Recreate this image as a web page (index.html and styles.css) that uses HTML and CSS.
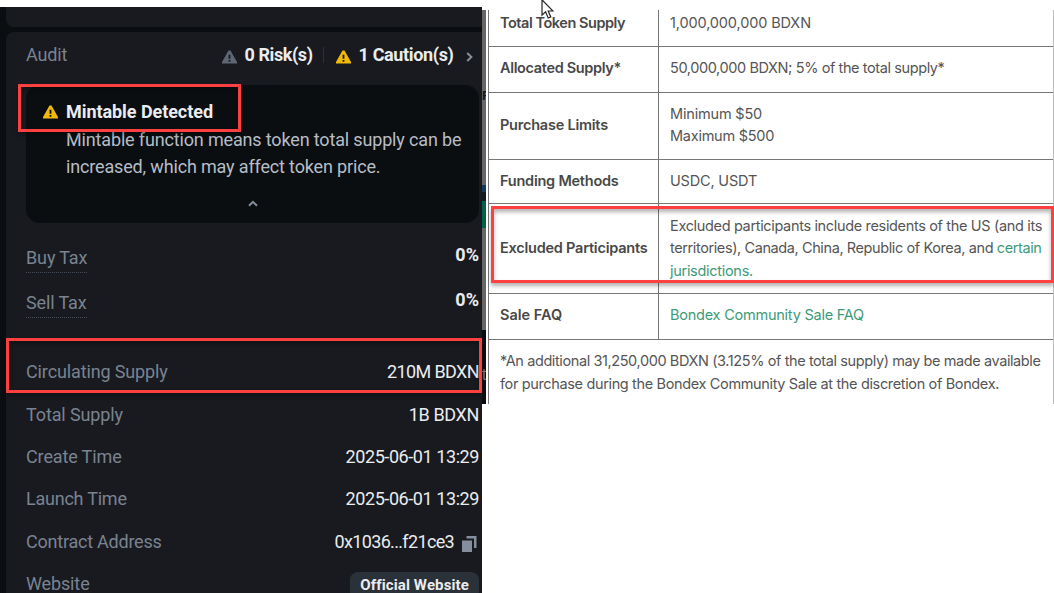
FILE: index.html
```
<!DOCTYPE html>
<html lang="en">
<head>
<meta charset="utf-8">
<title>BDXN token audit</title>
<link rel="stylesheet" href="styles.css">
</head>
<body>
<svg class="defs" width="0" height="0" aria-hidden="true">
  <symbol id="warn" viewBox="0 0 15 14"><path fill="currentColor" fill-rule="evenodd" d="M6.5.5h2L15 12v1.5H0V12zM6.6 4.8v4h1.8v-4zM6.6 10v1.8h1.8V10z"/></symbol>
</svg>
<main class="page">
  <section class="token">
    <div class="card card-prev"></div>
    <div class="card card-main">
      <div class="audit">
        <span class="label">Audit</span>
        <svg class="warn grey"><use href="#warn"/></svg>
        <b class="t-risk">0 Risk(s)</b>
        <i class="sep"></i>
        <svg class="warn yellow"><use href="#warn"/></svg>
        <b class="t-caution">1 Caution(s)</b>
        <svg class="chev" viewBox="0 0 7 10"><path d="M1.2 1 5.4 5 1.2 9"/></svg>
      </div>
      <div class="notice">
        <div class="notice-title"><svg class="warn yellow"><use href="#warn"/></svg><b class="t-mint">Mintable Detected</b></div>
        <p>Mintable function means token total supply can be<br>increased, which may affect token price.</p>
        <svg class="up" viewBox="0 0 10 7"><path d="M1 5.8 5 1.8 9 5.8"/></svg>
        <div class="mark mark-mint"></div>
      </div>
      <div class="tax"><span class="label dotted">Buy Tax</span><b class="pct">0%</b></div>
      <div class="tax"><span class="label dotted">Sell Tax</span><b class="pct">0%</b></div>
      <div class="facts">
        <div class="fact"><span class="label">Circulating Supply</span><span class="t-210">210M BDXN</span><div class="mark mark-circ"></div></div>
        <div class="fact"><span class="label">Total Supply</span><span class="t-1b">1B BDXN</span></div>
        <div class="fact"><span class="label">Create Time</span><span class="t-date">2025-06-01 13:29</span></div>
        <div class="fact"><span class="label t-narrow">Launch Time</span><span class="t-date">2025-06-01 13:29</span></div>
        <div class="fact"><span class="label t-narrow">Contract Address</span><span class="t-addr">0x1036...f21ce3</span><svg class="copy" viewBox="0 0 15 16"><path d="M4.500 0H14.500v12H12V2.500H4.500z"/><path d="M0 4.500h10V16H0z"/></svg></div>
        <div class="fact"><span class="label">Website</span><span class="site"><b>Official Website</b></span></div>
      </div>
    </div>
  </section>
  <div class="edge"><i class="e-top">F</i><i class="e-blue"></i><i class="e-dark"></i><i class="e-green"></i><i class="e-grey"></i><i class="e-end">t</i></div>
  <section class="sale">
    <div class="row"><b class="s-tts">Total Token Supply</b><p><span class="s-1b">1,000,000,000 BDXN</span></p></div>
    <div class="row"><b class="s-alloc">Allocated Supply*</b><p><span class="s-50">50,000,000 BDXN; 5% of the total supply*</span></p></div>
    <div class="row limits"><b>Purchase Limits</b><p><span class="s-min">Minimum $50</span><span class="s-max">Maximum $500</span></p></div>
    <div class="row funding"><b>Funding Methods</b><p><span class="s-min">USDC, USDT</span></p></div>
    <div class="row excluded"><b>Excluded Participants</b><p><span class="s-ex1">Excluded participants include residents of the US (and its</span><span class="s-ex2">territories), Canada, China, Republic of Korea, and <a>certain</a></span><span class="s-ex3"><a>jurisdictions.</a></span></p><div class="mark mark-excl"></div></div>
    <div class="row"><b class="s-faq">Sale FAQ</b><p><a class="s-bond">Bondex Community Sale FAQ</a></p></div>
    <p class="foot"><span class="s-f1">*An additional 31,250,000 BDXN (3.125% of the total supply) may be made available</span><br><span class="s-f2">for purchase during the Bondex Community Sale at the discretion of Bondex.</span></p>
  </section>
</main>
<svg class="cursor" viewBox="0 0 13 21"><path d="M1 .8V16.200L4.600 12.800 7.200 19 9.800 17.900 7.200 12H12z"/></svg>
</body>
</html>
```
FILE: styles.css
```
* { box-sizing: border-box; }
body { margin: 0; background: #fff; overflow: hidden; }
.page { display: flex; align-items: flex-start; width: 1054px; height: 593px; overflow: hidden; }
.defs { position: absolute; }

.token { flex: none; width: 482px; height: 586px; margin-top: 7px; padding-left: 6px; background: #0b0e11; font: 18px/26px Roboto, sans-serif; color: #eaecef; overflow: hidden; }
.card { background: #181a20; }
.card-prev { height: 20px; border-radius: 0 0 0 8px; }
.card-main { height: 561px; margin-top: 5px; padding: 0 3px 0 20px; border-radius: 8px 0 0 0; }
.label { margin-right: auto; color: #7a8390; letter-spacing: -.13px; }
.warn { width: 15px; height: 14px; flex: none; }
.grey { color: #5e6673; }
.yellow { color: #f0b90b; }
b { font-weight: 700; white-space: nowrap; }
span { white-space: nowrap; }
.t-risk { letter-spacing: -.42px; }
.t-caution { letter-spacing: -.36px; }
.t-mint { letter-spacing: -.06px; }
.t-210 { letter-spacing: -.6px; }
.t-1b { letter-spacing: -.35px; }
.t-date { letter-spacing: -.42px; }
.t-narrow { letter-spacing: -.23px; }
.t-addr { letter-spacing: -.66px; }

.audit { display: flex; align-items: center; height: 46px; padding-right: 6.500px; }
.audit .warn { margin: 4px 8px 0 0; }
.sep { width: 1px; height: 16px; margin: 0 12px 0 10px; background: #2b3139; }
.chev { width: 7px; height: 10px; margin: 3px 0 0 12px; }
.chev path, .up path { fill: none; stroke: #848e9c; stroke-width: 2; }

.notice { position: relative; margin-top: 7px; height: 138px; padding: 14px 0 0 17px; border-radius: 14px; background: #0b0e11; }
.notice-title { display: flex; align-items: center; gap: 8px; height: 26px; }
.notice p { margin: 1px 0 0 23px; line-height: 27px; letter-spacing: -.155px; white-space: nowrap; color: #b7bdc6; }
.up { display: block; width: 10px; height: 7px; margin: 20px 0 0 205px; }
.mark { position: absolute; border: 3px solid #ff4040; box-shadow: 0 3px 4px rgba(0,0,0,.3), inset 0 3px 4px rgba(0,0,0,.3); }
.mark-mint { left: -8px; top: -1px; width: 223px; height: 48px; }

.tax { display: flex; align-items: flex-start; height: 45px; }
.notice + .tax { margin-top: 22px; }
.dotted { height: 28px; border-bottom: 1px dotted #474d57; }
.pct { margin-top: -3px; }

.facts { padding-top: 16px; }
.fact { position: relative; display: flex; align-items: center; height: 42.350px; }
.mark-circ { left: -20px; top: -13px; width: 476px; height: 55px; }
.copy { width: 15px; height: 16px; margin: 4px 2px 0 8px; fill: #848e9c; }
.site { height: 27px; margin-top: 4px; padding: 0 10px; border-radius: 8px; background: #2b3139; font-size: 15px; letter-spacing: .12px; }

.edge { flex: none; display: flex; flex-direction: column; width: 4px; height: 394px; margin-top: 10px; overflow: hidden; font: 13px/14px "Liberation Sans", sans-serif; }
.edge i { font-style: normal; flex: none; }
.e-top { height: 175px; padding-top: 79px; background: #666; color: #111820; font-weight: 700; }
.e-blue { height: 7px; background: #123a5c; }
.e-dark { height: 9px; background: #101c20; }
.e-green { height: 27px; background: #00614b; }
.e-grey { height: 102px; background: #666; }
.e-end { height: 74px; padding-top: 38px; background: #0b0e11; color: #777; font-size: 16px; }

.sale { flex: none; width: 566px; height: 394px; margin: 10px 0 0 2px; border-left: 1px solid #777; border-right: 1px solid #bbb; font: 14.500px/22.500px Inter, sans-serif; color: #555; }
.row { position: relative; display: grid; grid-template-columns: 169px 1fr; align-items: center; height: 46px; border-bottom: 1px solid #777; }
.row b { padding: 0 0 2px 11px; font-weight: 600; letter-spacing: -.23px; color: #484848; }
.row p { display: flex; flex-direction: column; justify-content: center; height: 100%; margin: 0; padding: 0 0 2px 11px; border-left: 1px solid #777; }
.row:first-child { height: 37px; }
.row:first-child b, .row:first-child p { padding-bottom: 10px; }
.row.limits { height: 67px; }
.row.funding { height: 44px; }
.row.excluded { height: 90px; }
.row.funding b, .row.funding p, .row.excluded b, .row.excluded p { padding-bottom: 0; }
.row .s-tts { letter-spacing: -.46px; }
.row .s-alloc { letter-spacing: -.34px; }
.row .s-faq { letter-spacing: 0; }
.s-1b { letter-spacing: -.13px; }
.s-50 { letter-spacing: -.4px; }
.s-min { letter-spacing: -.18px; }
.s-max { letter-spacing: -.25px; }
.s-ex1 { letter-spacing: -.34px; }
.s-ex2 { letter-spacing: -.4px; }
.s-ex3 { letter-spacing: -.29px; }
.s-bond { letter-spacing: -.23px; }
.s-f1 { letter-spacing: -.4px; }
.s-f2 { letter-spacing: -.355px; }
.sale a { color: #3d9a78; }
.foot { margin: 10px 0 0 11px; }
.mark-excl { left: 2px; top: 2px; width: 563px; height: 77px; }
.cursor { position: absolute; left: 541px; top: -1px; width: 13px; height: 21px; fill: #fff; stroke: #222; stroke-width: 1.200; }
```
